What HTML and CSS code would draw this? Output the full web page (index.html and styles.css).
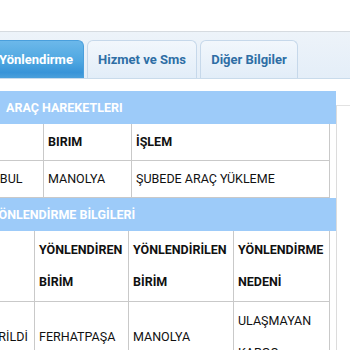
FILE: index.html
```html
<!DOCTYPE html>
<html lang="tr">
<head>
<meta charset="utf-8">
<link rel="stylesheet" href="styles.css">
</head>
<body>
<div class="top"></div>
<div class="tabstrip">
  <div class="tab tab-active tab-w1">Yönlendirme</div>
  <div class="tab tab-w2">Hizmet ve Sms</div>
  <div class="tab tab-w3">Diğer Bilgiler</div>
</div>
<div class="main">
  <div class="panel">
    <div class="sec-head sec-head-1">ARAÇ HAREKETLERI</div>
    <table class="grid grid-1">
      <colgroup><col class="c1a"><col class="c1b"><col class="c1c"></colgroup>
      <tr><th></th><th>BIRIM</th><th>İŞLEM</th></tr>
      <tr><td class="first1">İSTANBUL</td><td>MANOLYA</td><td>ŞUBEDE ARAÇ YÜKLEME</td></tr>
    </table>
    <div class="sec-head sec-head-2">YÖNLENDİRME BİLGİLERİ</div>
    <table class="grid grid-2">
      <colgroup><col class="c2a"><col class="c2b"><col class="c2c"><col class="c2d"></colgroup>
      <tr><th></th><th>YÖNLENDİREN<br>BİRİM</th><th>YÖNLENDİRİLEN<br>BİRİM</th><th>YÖNLENDİRME<br>NEDENİ</th></tr>
      <tr><td class="first2">GÖNDERİLDİ</td><td>FERHATPAŞA</td><td>MANOLYA</td><td>ULAŞMAYAN<br>KARGO</td></tr>
    </table>
  </div>
  <div class="side"></div>
</div>
</body>
</html>
```
FILE: styles.css
```css
html, body {
  margin: 0;
  padding: 0;
  background: #ffffff;
  overflow: hidden;
  width: 350px;
  height: 350px;
  font-family: Roboto, "Liberation Sans", sans-serif;
}
.top {
  height: 31px;
  border-bottom: 1px solid #d6dbe0;
}
.tabstrip {
  height: 46px;
  display: flex;
  align-items: flex-end;
  gap: 3px;
  margin-left: -12px;
  background: linear-gradient(#edf3f9, #e4eef8);
  border-bottom: 1px solid #c9dbeb;
}
.tab {
  box-sizing: border-box;
  display: flex;
  align-items: center;
  justify-content: center;
  font-size: 13px;
  font-weight: bold;
  color: #2e6ea5;
  border: 1px solid #c6d8ea;
  border-bottom: none;
  border-radius: 6px 6px 0 0;
  background: linear-gradient(#f2f7fc, #e2edf8);
  height: 38px;
}
.tab-active {
  color: #ffffff;
  border-color: #4a9fdc;
  background: linear-gradient(#6cb8ea, #4ea7e1 55%, #3894d8 85%, #4aa0dc);
}
.tab-w1 { width: 96px; }
.tab-w2 { width: 110px; }
.tab-w3 { width: 98px; }
.main {
  display: flex;
  margin-top: 12px;
}
.panel {
  width: 386px;
  flex: none;
  margin-left: -50px;
}
.side {
  flex: 1;
  margin-top: 14px;
  border-top: 1px solid #e2e2e2;
  border-left: 1px solid #dcdcdc;
  height: 300px;
}
.sec-head {
  height: 33px;
  line-height: 33px;
  background: #9dcbf9;
  color: #ffffff;
  font-size: 12.5px;
  font-weight: bold;
}
.sec-head-1 { padding-left: 56px; }
.sec-head-2 { padding-left: 41px; }
.grid {
  border-collapse: collapse;
  table-layout: fixed;
  font-size: 12.5px;
  color: #111111;
}
.grid th, .grid td {
  border: 1px solid #c9c9c9;
  padding: 2px 4px;
  line-height: 32px;
  text-align: left;
  vertical-align: middle;
  white-space: nowrap;
  overflow: hidden;
}
.grid th { font-weight: bold; }
.grid-1 { width: 379px; }
.grid-1 tr:first-child th { border-top: none; }
.grid-2 tr:first-child th { border-top: none; }
.grid-2 th, .grid-2 td { padding: 3px 4px; }
.c1a { width: 93px; }
.c1b { width: 88px; }
.c1c { width: 198px; }
.grid-2 { width: 379px; }
.c2a { width: 84px; }
.c2b { width: 94px; }
.c2c { width: 105px; }
.c2d { width: 96px; }
.grid .first1 { padding-left: 14px; }
.grid .first2 { padding-left: 6px; }
```
